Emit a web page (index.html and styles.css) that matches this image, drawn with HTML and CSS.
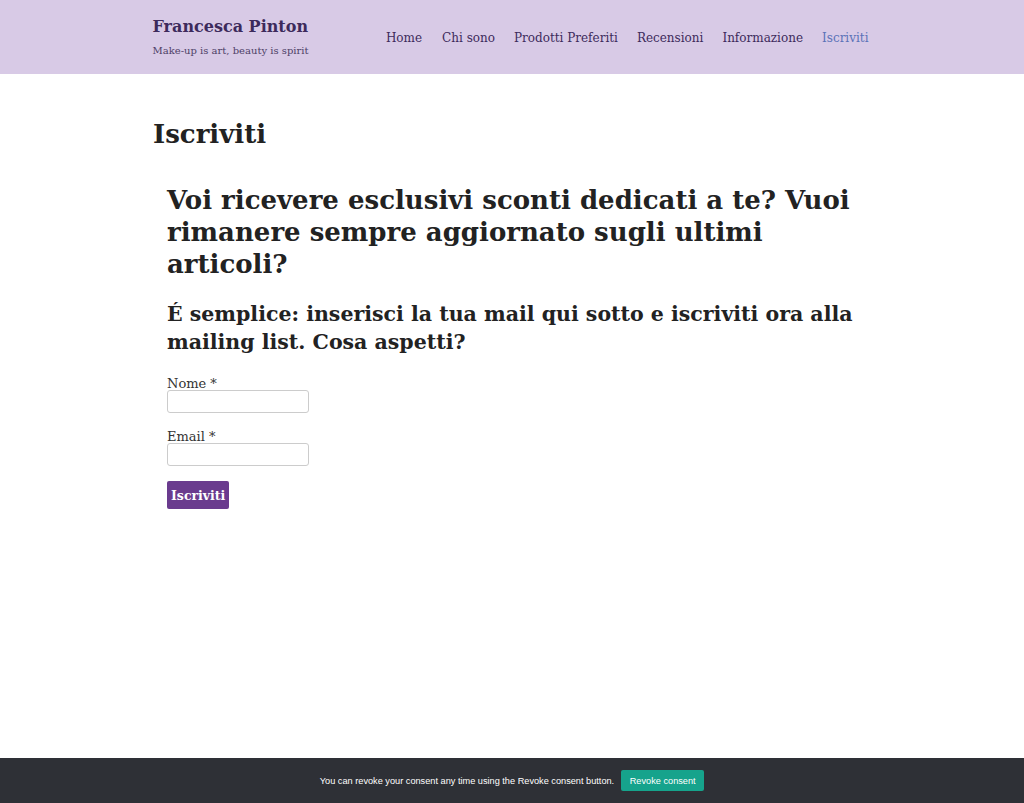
FILE: index.html
```html
<!DOCTYPE html>
<html lang="it">
<head>
<meta charset="utf-8">
<title>Iscriviti – Francesca Pinton</title>
<link rel="stylesheet" href="styles.css">
</head>
<body>
<header class="site-header">
  <div class="container header-inner">
    <div class="branding">
      <div class="site-title">Francesca Pinton</div>
      <div class="site-desc">Make-up is art, beauty is spirit</div>
    </div>
    <nav class="main-nav">
      <a href="#">Home</a>
      <a href="#">Chi sono</a>
      <a href="#">Prodotti Preferiti</a>
      <a href="#">Recensioni</a>
      <a href="#">Informazione</a>
      <a href="#" class="current">Iscriviti</a>
    </nav>
  </div>
</header>
<main class="container content">
  <h1 class="page-title">Iscriviti</h1>
  <div class="entry">
    <h2 class="lead">Voi ricevere esclusivi sconti dedicati a te? Vuoi rimanere sempre aggiornato sugli ultimi articoli?</h2>
    <h3 class="sub">É semplice: inserisci la tua mail qui sotto e iscriviti ora alla mailing list. Cosa aspetti?</h3>
    <form class="signup">
      <label class="field">
        <span class="label-text">Nome *</span>
        <input type="text" class="input">
      </label>
      <label class="field">
        <span class="label-text">Email *</span>
        <input type="email" class="input">
      </label>
      <button type="button" class="btn">Iscriviti</button>
    </form>
  </div>
</main>
<div class="consent-bar">
  <span class="consent-text">You can revoke your consent any time using the Revoke consent button.</span>
  <button type="button" class="consent-btn">Revoke consent</button>
</div>
</body>
</html>
```
FILE: styles.css
```css
html, body {
  margin: 0;
  padding: 0;
  height: 100%;
}
body {
  font-family: "DejaVu Serif", Georgia, serif;
  color: #222;
  background: #fff;
  position: relative;
}
.container {
  width: 720px;
  margin: 0 auto;
}
.site-header {
  background: #d8cae6;
  height: 74px;
}
.header-inner {
  display: flex;
  justify-content: space-between;
  align-items: flex-start;
  padding-top: 16px;
  box-sizing: border-box;
  width: 721px;
}
.branding {
  padding-left: 1px;
}
.site-title {
  font-size: 16px;
  font-weight: bold;
  color: #3d2a5c;
  line-height: 22px;
}
.site-desc {
  font-size: 10px;
  color: #4e3f66;
  margin-top: 7px;
}
.main-nav {
  display: flex;
  gap: 19px;
  padding-top: 15px;
  padding-right: 4px;
}
.main-nav a {
  font-size: 12px;
  color: #3d2a5c;
  text-decoration: none;
}
.main-nav a:first-child {
  margin-right: 1px;
}
.main-nav a.current {
  color: #5b72b8;
}
.content {
  padding-top: 44px;
}
.page-title {
  margin: 0 0 34px 1px;
  font-size: 26px;
  font-weight: bold;
  line-height: 32px;
  color: #222;
}
.entry {
  padding-left: 15px;
}
.lead {
  margin: 0 0 20px;
  font-size: 26px;
  line-height: 32px;
  font-weight: bold;
  color: #222;
}
.sub {
  margin: 0 0 20px;
  font-size: 20.5px;
  line-height: 28px;
  font-weight: bold;
  color: #222;
}
.signup {
  display: flex;
  flex-direction: column;
  align-items: flex-start;
}
.field {
  display: flex;
  flex-direction: column;
  margin-bottom: 16px;
}
.label-text {
  font-size: 13px;
  line-height: 15px;
  color: #333;
}
.input {
  width: 142px;
  height: 23px;
  box-sizing: border-box;
  border: 1px solid #ccc;
  border-radius: 3px;
  margin: -1px 0 0;
}
.btn {
  background: #6a3b8e;
  color: #fff;
  border: none;
  border-radius: 2px;
  font-family: "DejaVu Serif", Georgia, serif;
  font-weight: bold;
  font-size: 12.5px;
  height: 28px;
  padding: 0 4px;
  margin-top: -1px;
}
.consent-bar {
  position: fixed;
  left: 0;
  right: 0;
  bottom: 0;
  height: 45px;
  background: #2e3036;
  display: flex;
  align-items: center;
  justify-content: center;
  gap: 7px;
  font-family: "Liberation Sans", Arial, sans-serif;
}
.consent-text {
  color: #fff;
  font-size: 9.2px;
}
.consent-btn {
  background: #16a38c;
  color: #fff;
  border: none;
  border-radius: 2px;
  font-family: "Liberation Sans", Arial, sans-serif;
  font-size: 9.2px;
  height: 21px;
  width: 83px;
  padding: 0;
}
```
